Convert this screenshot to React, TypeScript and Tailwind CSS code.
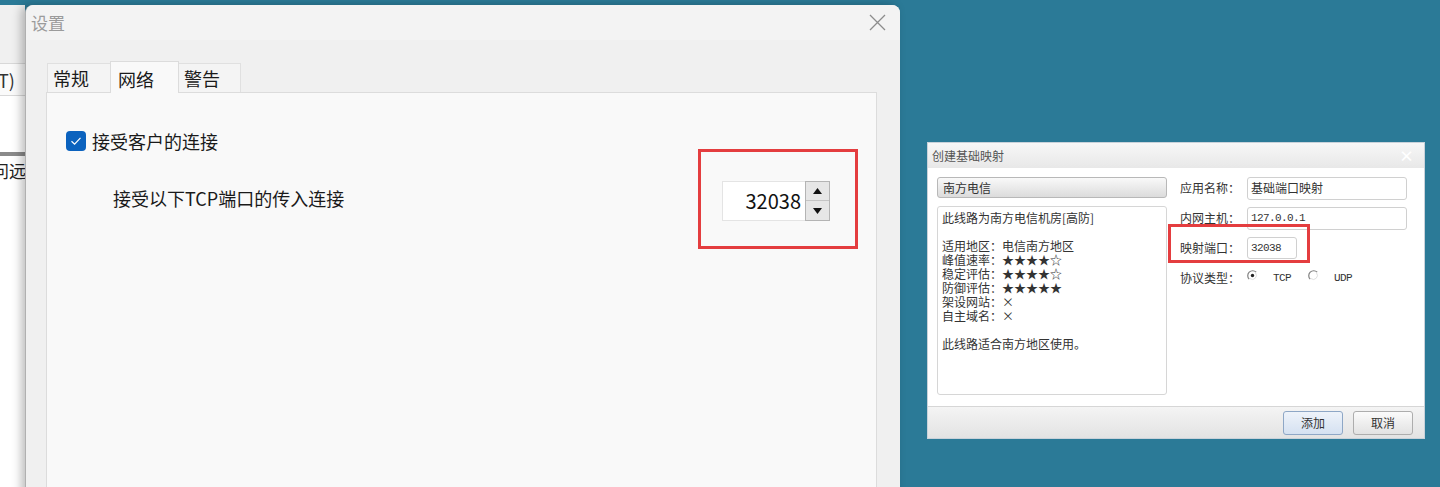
import React from "react";

const cjk = "font-['Noto_Sans_CJK_SC','Noto_Sans',sans-serif]";
const mono = "font-['Liberation_Mono','DejaVu_Sans_Mono',monospace]";

function BackWindow() {
  return (
    <div className="mt-[5px] w-[25px] h-[482px] shrink-0 flex flex-col bg-[#f0f0f0] overflow-hidden">
      <div className="h-[58px]" />
      <div className="h-[33px] bg-[#fafafa] border-y border-[#d8d8d8] flex items-center text-[18px] text-[#333] leading-none whitespace-nowrap">
        <span className="inline-block -ml-[2px]">T)</span>
      </div>
      <div className="h-[56px] bg-white" />
      <div className="h-[4px] bg-[#8a8a8a]" />
      <div className="flex-1 bg-white pt-[5px] text-[17px] leading-[20px] text-[#222] whitespace-nowrap">
        <span className="inline-block -ml-[8px]">问远</span>
      </div>
    </div>
  );
}

function SpinBox() {
  return (
    <div className="relative flex h-[40px]">
      <div className="w-[83px] h-[40px] bg-white border border-[#e4e4e4] border-r-0 flex items-center justify-end pr-[4px] text-[20px] leading-none text-[#111]">
        32038
      </div>
      <div className="w-[25px] h-[40px] flex flex-col border border-[#b4b4b4] bg-[#e6e6e6]">
        <div className="h-[19px] border-b border-[#c4c4c4] flex items-center justify-center">
          <svg width="9" height="6" viewBox="0 0 9 6">
            <polygon points="4.5,0 9,6 0,6" fill="#111" />
          </svg>
        </div>
        <div className="flex-1 flex items-center justify-center">
          <svg width="9" height="6" viewBox="0 0 9 6">
            <polygon points="0,0 9,0 4.5,6" fill="#111" />
          </svg>
        </div>
      </div>
      <div className="absolute left-[-24px] top-[-32px] right-[-28px] bottom-[-28px] border-[3px] border-[#e43d3f] pointer-events-none" />
    </div>
  );
}

function SettingsDialog() {
  return (
    <div className="mt-[5px] w-[875px] h-[500px] shrink-0 flex flex-col bg-[#f0f0f0] rounded-t-[8px] border-l border-[#b0b0b0] shadow-[-4px_0_10px_rgba(0,0,0,0.25)]">
      <div className="h-[35px] bg-[#f3f3f3] rounded-t-[8px] flex items-center justify-between pl-[5px] pr-[14px]">
        <span className="text-[17px] text-[#9b9b9b] leading-none">设置</span>
        <svg width="17" height="17" viewBox="0 0 17 17">
          <path d="M1 1 L16 16 M16 1 L1 16" stroke="#8c8c8c" strokeWidth="1.3" fill="none" />
        </svg>
      </div>
      <div className="flex-1 flex flex-col pt-[21px] pl-[20px] pr-[23px]">
        <div className="h-[31px] flex items-end pl-[1px] text-[18px] text-[#1a1a1a] leading-none">
          <div className="w-[63px] h-[29px] bg-[#f4f4f4] border-t border-l border-[#e0e0e0] flex items-center pl-[5px]">常规</div>
          <div className="relative z-10 -mb-px w-[69px] h-[32px] bg-[#f9f9f9] border-t border-x border-[#dcdcdc] flex items-start pt-[8px] pl-[7px]">网络</div>
          <div className="w-[62px] h-[29px] bg-[#f4f4f4] border-t border-r border-[#e0e0e0] flex items-center pl-[5px]">警告</div>
        </div>
        <div className="flex-1 border border-[#dcdcdc] bg-[#f9f9f9] pt-[38px] pl-[19px] pr-[46px]">
          <div className="h-[20px] flex items-center gap-[6px]">
            <div className="w-[20px] h-[20px] rounded-[4px] bg-[#0b62be] flex items-center justify-center">
              <svg width="12" height="10" viewBox="0 0 12 10">
                <path d="M1.5 5.2 L4.6 8.2 L10.5 1.8" stroke="#fff" strokeWidth="1.2" fill="none" />
              </svg>
            </div>
            <span className="text-[18px] leading-none text-[#1a1a1a]">接受客户的连接</span>
          </div>
          <div className="mt-[30px] h-[40px] flex items-center justify-between">
            <span className="ml-[47px] mb-[6px] text-[18px] leading-none text-[#1a1a1a]">接受以下TCP端口的传入连接</span>
            <SpinBox />
          </div>
        </div>
      </div>
    </div>
  );
}

function Radio({ checked }: { checked: boolean }) {
  return (
    <svg width="11" height="11" viewBox="0 0 11 11" className="mb-[6px]">
      <path d="M9.2 2.2 A4.5 4.5 0 1 0 2.2 9.2" stroke="#808080" strokeWidth="1.2" fill="none" />
      <path d="M8.6 3 A4 4 0 0 1 3 8.6" stroke="#e0e0e0" strokeWidth="1" fill="none" />
      {checked && <circle cx="5.5" cy="5.5" r="1.7" fill="#222" />}
    </svg>
  );
}

function MappingDialog() {
  const lines: (string | null)[] = [
    "此线路为南方电信机房[高防]",
    null,
    "适用地区：电信南方地区",
    "峰值速率：★★★★☆",
    "稳定评估：★★★★☆",
    "防御评估：★★★★★",
    "架设网站：×",
    "自主域名：×",
    null,
    "此线路适合南方地区使用。",
  ];
  return (
    <div className="ml-[27px] mt-[142px] w-[498px] shrink-0 flex flex-col border border-[#c9d2da] bg-white text-[12px] text-[#333]">
      <div className="h-[25px] bg-gradient-to-b from-[#f7f7f7] to-[#e8e8e8] flex items-center justify-between pl-[4px] pr-[10px]">
        <span className="text-[#555] leading-none">创建基础映射</span>
        <span className="text-white text-[15px] font-bold leading-none">×</span>
      </div>
      <div className="h-[238px] flex items-start pl-[9px]">
        <div className="w-[230px] mt-[9px] flex flex-col">
          <div className="h-[21px] border border-[#b8b8b8] rounded-[3px] bg-gradient-to-b from-[#f9f9f9] to-[#dcdcdc] flex items-center pl-[5px] leading-none">
            南方电信
          </div>
          <div className="mt-[8px] h-[189px] border border-[#d6d6d6] rounded-[3px] pl-[4px] pt-[4px] leading-[14px]">
            {lines.map((l, i) =>
              l === null ? <div key={i} className="h-[14px]" /> : <div key={i} className="h-[14px] whitespace-nowrap">{l}</div>
            )}
          </div>
        </div>
        <div className="ml-[13px] mt-[5px] flex flex-col">
          <div className="h-[30px] flex items-center">
            <span className="w-[67px]">应用名称：</span>
            <div className="w-[160px] h-[23px] border border-[#d0d0d0] rounded-[3px] flex items-center pl-[3px]">基础端口映射</div>
          </div>
          <div className="h-[30px] flex items-center">
            <span className="w-[67px]">内网主机：</span>
            <div className={`w-[160px] h-[23px] border border-[#d0d0d0] rounded-[3px] flex items-center pl-[3px] ${mono} text-[11px] tracking-[-0.6px]`}>127.0.0.1</div>
          </div>
          <div className="relative h-[30px] flex items-center">
            <span className="w-[67px]">映射端口：</span>
            <div className={`w-[50px] h-[22px] border border-[#d0d0d0] rounded-[3px] flex items-center pl-[3px] ${mono} text-[11px] tracking-[-0.6px]`}>32038</div>
            <div className="absolute left-[-12px] top-[-9px] w-[142px] h-[39px] border-[3px] border-[#e43d3f] pointer-events-none" />
          </div>
          <div className="h-[30px] flex items-center">
            <span className="w-[67px]">协议类型：</span>
            <Radio checked />
            <span className={`ml-[15px] ${mono} text-[11px] tracking-[-0.6px]`}>TCP</span>
            <span className="ml-[17px] flex items-center"><Radio checked={false} /></span>
            <span className={`ml-[15px] ${mono} text-[11px] tracking-[-0.6px]`}>UDP</span>
          </div>
        </div>
      </div>
      <div className="h-[32px] border-t border-[#d6d6d6] bg-gradient-to-b from-[#f4f4f4] to-[#e3e3e3] flex justify-end items-start pt-[4px] pr-[11px] gap-[10px]">
        <div className="w-[60px] h-[24px] rounded-[3px] border border-[#8ea7c6] bg-gradient-to-b from-[#eef3fa] to-[#d5e1f1] flex items-center justify-center leading-none">添加</div>
        <div className="w-[60px] h-[24px] rounded-[3px] border border-[#adadad] bg-gradient-to-b from-[#fbfbfb] to-[#e2e2e2] flex items-center justify-center leading-none">取消</div>
      </div>
    </div>
  );
}

export default function App() {
  return (
    <div className={`w-[1440px] h-[487px] overflow-hidden bg-[#2b7a97] flex items-start ${cjk}`}>
      <BackWindow />
      <SettingsDialog />
      <MappingDialog />
    </div>
  );
}
